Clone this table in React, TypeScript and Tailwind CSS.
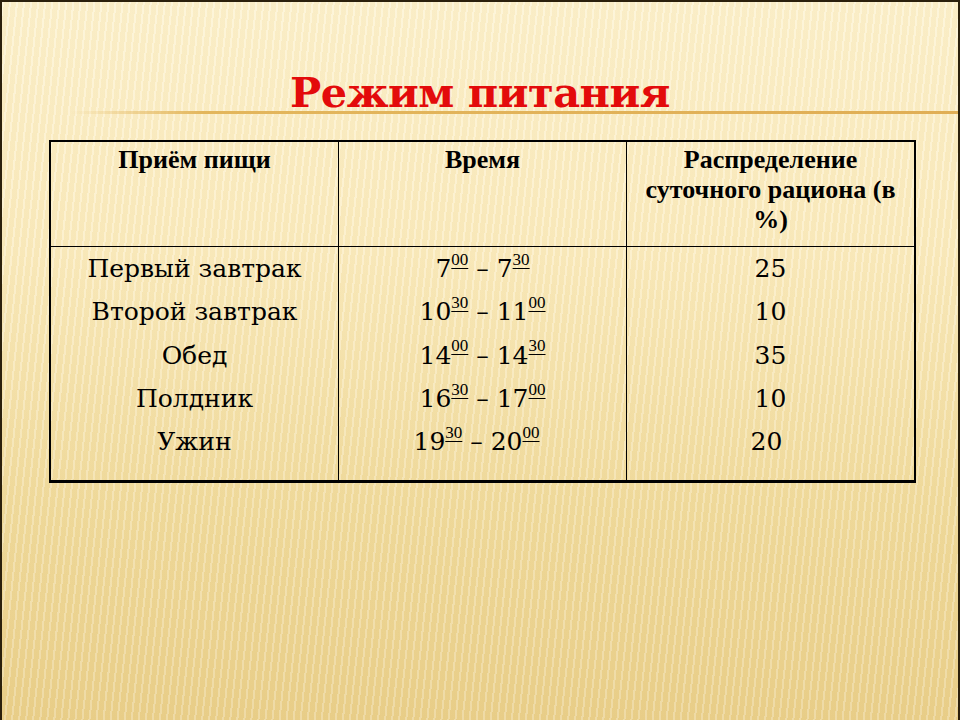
const meals = ["Первый завтрак", "Второй завтрак", "Обед", "Полдник", "Ужин"];

const times: [string, string, string, string][] = [
  ["7", "00", "7", "30"],
  ["10", "30", "11", "00"],
  ["14", "00", "14", "30"],
  ["16", "30", "17", "00"],
  ["19", "30", "20", "00"],
];

const shares = ["25", "10", "35", "10", "20"];

function Sup({ children }: { children: string }) {
  return (
    <sup className="relative top-[-3px] align-super font-['Liberation_Serif',serif] text-[17px] underline decoration-1 underline-offset-[3px]">
      {children}
    </sup>
  );
}

export default function App() {
  return (
    <div className="relative h-[720px] w-[960px] overflow-hidden border-2 border-b-0 border-[#2b200c] bg-[repeating-linear-gradient(96deg,rgba(255,255,255,0.22)_0_2px,rgba(200,160,60,0.06)_2px_7px),linear-gradient(180deg,#fdf2cf_0%,#fbecc0_35%,#f1dc9f_70%,#ead08c_100%)] font-['DejaVu_Serif',serif] text-black">
      {/* title */}
      <div className="relative pt-[62px] text-center">
        <h1 className="text-[41.5px] font-bold leading-[58px] tracking-[-0.5px] text-[#e30b0b]">Режим питания</h1>
        <div className="absolute left-[68px] right-0 top-[109px] h-[3px] bg-[linear-gradient(90deg,rgba(226,180,90,0)_0%,#e3b65c_15%,#e0ae55_100%)]" />
      </div>

      {/* table */}
      <div className="ml-[47px] mt-[18px] w-[867px] border-[2px] border-b-[3px] border-black">
        <div className="grid h-[105px] grid-cols-[288px_288px_1fr] border-b border-black font-['Liberation_Serif',serif] text-[26px] font-bold leading-[30px]">
          <div className="border-r border-black pt-[3px] text-center">Приём пищи</div>
          <div className="border-r border-black pt-[3px] text-center">Время</div>
          <div className="pt-[3px] text-center">
            Распределение
            <br />
            суточного рациона (в
            <br />
            %)
          </div>
        </div>
        <div className="grid h-[233px] grid-cols-[288px_288px_1fr] text-[25px] leading-[43.3px]">
          <div className="border-r border-black text-center">
            {meals.map((m) => (
              <div key={m}>{m}</div>
            ))}
          </div>
          <div className="border-r border-black text-center">
            {times.map(([a, b, c, d], i) => (
              <div key={a} className={i === 4 ? "pr-[12px]" : ""}>
                {a}
                <Sup>{b}</Sup> – {c}
                <Sup>{d}</Sup>
              </div>
            ))}
          </div>
          <div className="text-center">
            {shares.map((s, i) => (
              <div key={i} className={i === 4 ? "pr-[8px]" : ""}>
                {s}
              </div>
            ))}
          </div>
        </div>
      </div>
    </div>
  );
}
